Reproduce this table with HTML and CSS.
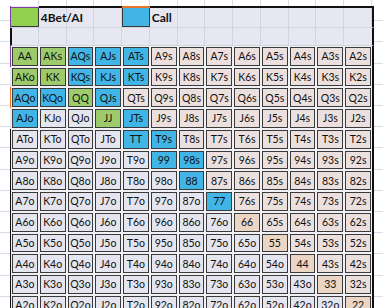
FILE: index.html
```html
<!DOCTYPE html>
<html>
<head>
<meta charset="utf-8">
<link rel="stylesheet" href="styles.css">
</head>
<body>
<div class="sheet">
  <div class="margin"></div>
  <div class="main">
    <div class="top-strip"></div>
    <div class="legend">
      <div class="swatch swatch-green"><span class="fill fill-green"></span></div>
      <div class="label label-4bet">4Bet/AI</div>
      <div class="swatch swatch-blue"><span class="fill fill-blue"></span></div>
      <div class="label label-call">Call</div>
    </div>
    <div class="blank"></div>
    <div class="hands">
      <div class="hand-row edge-purple"><div class="cell g">AA</div><div class="cell g">AKs</div><div class="cell b">AQs</div><div class="cell b">AJs</div><div class="cell b">ATs</div><div class="cell s">A9s</div><div class="cell s">A8s</div><div class="cell s">A7s</div><div class="cell s">A6s</div><div class="cell s">A5s</div><div class="cell s">A4s</div><div class="cell s">A3s</div><div class="cell s">A2s</div></div>
      <div class="hand-row"><div class="cell g">AKo</div><div class="cell g">KK</div><div class="cell b">KQs</div><div class="cell b">KJs</div><div class="cell b">KTs</div><div class="cell s">K9s</div><div class="cell s">K8s</div><div class="cell s">K7s</div><div class="cell s">K6s</div><div class="cell s">K5s</div><div class="cell s">K4s</div><div class="cell s">K3s</div><div class="cell s">K2s</div></div>
      <div class="hand-row edge-orange"><div class="cell b">AQo</div><div class="cell b">KQo</div><div class="cell g">QQ</div><div class="cell b">QJs</div><div class="cell s">QTs</div><div class="cell s">Q9s</div><div class="cell s">Q8s</div><div class="cell s">Q7s</div><div class="cell s">Q6s</div><div class="cell s">Q5s</div><div class="cell s">Q4s</div><div class="cell s">Q3s</div><div class="cell s">Q2s</div></div>
      <div class="hand-row"><div class="cell b">AJo</div><div class="cell o">KJo</div><div class="cell o">QJo</div><div class="cell g">JJ</div><div class="cell b">JTs</div><div class="cell s">J9s</div><div class="cell s">J8s</div><div class="cell s">J7s</div><div class="cell s">J6s</div><div class="cell s">J5s</div><div class="cell s">J4s</div><div class="cell s">J3s</div><div class="cell s">J2s</div></div>
      <div class="hand-row edge-black"><div class="cell o">ATo</div><div class="cell o">KTo</div><div class="cell o">QTo</div><div class="cell o">JTo</div><div class="cell b">TT</div><div class="cell b">T9s</div><div class="cell s">T8s</div><div class="cell s">T7s</div><div class="cell s">T6s</div><div class="cell s">T5s</div><div class="cell s">T4s</div><div class="cell s">T3s</div><div class="cell s">T2s</div></div>
      <div class="hand-row edge-black"><div class="cell o">A9o</div><div class="cell o">K9o</div><div class="cell o">Q9o</div><div class="cell o">J9o</div><div class="cell o">T9o</div><div class="cell b">99</div><div class="cell b">98s</div><div class="cell s">97s</div><div class="cell s">96s</div><div class="cell s">95s</div><div class="cell s">94s</div><div class="cell s">93s</div><div class="cell s">92s</div></div>
      <div class="hand-row edge-black"><div class="cell o">A8o</div><div class="cell o">K8o</div><div class="cell o">Q8o</div><div class="cell o">J8o</div><div class="cell o">T8o</div><div class="cell o">98o</div><div class="cell b">88</div><div class="cell s">87s</div><div class="cell s">86s</div><div class="cell s">85s</div><div class="cell s">84s</div><div class="cell s">83s</div><div class="cell s">82s</div></div>
      <div class="hand-row edge-black"><div class="cell o">A7o</div><div class="cell o">K7o</div><div class="cell o">Q7o</div><div class="cell o">J7o</div><div class="cell o">T7o</div><div class="cell o">97o</div><div class="cell o">87o</div><div class="cell b">77</div><div class="cell s">76s</div><div class="cell s">75s</div><div class="cell s">74s</div><div class="cell s">73s</div><div class="cell s">72s</div></div>
      <div class="hand-row edge-black"><div class="cell o">A6o</div><div class="cell o">K6o</div><div class="cell o">Q6o</div><div class="cell o">J6o</div><div class="cell o">T6o</div><div class="cell o">96o</div><div class="cell o">86o</div><div class="cell o">76o</div><div class="cell p">66</div><div class="cell s">65s</div><div class="cell s">64s</div><div class="cell s">63s</div><div class="cell s">62s</div></div>
      <div class="hand-row edge-black"><div class="cell o">A5o</div><div class="cell o">K5o</div><div class="cell o">Q5o</div><div class="cell o">J5o</div><div class="cell o">T5o</div><div class="cell o">95o</div><div class="cell o">85o</div><div class="cell o">75o</div><div class="cell o">65o</div><div class="cell p">55</div><div class="cell s">54s</div><div class="cell s">53s</div><div class="cell s">52s</div></div>
      <div class="hand-row edge-black"><div class="cell o">A4o</div><div class="cell o">K4o</div><div class="cell o">Q4o</div><div class="cell o">J4o</div><div class="cell o">T4o</div><div class="cell o">94o</div><div class="cell o">84o</div><div class="cell o">74o</div><div class="cell o">64o</div><div class="cell o">54o</div><div class="cell p">44</div><div class="cell s">43s</div><div class="cell s">42s</div></div>
      <div class="hand-row edge-black"><div class="cell o">A3o</div><div class="cell o">K3o</div><div class="cell o">Q3o</div><div class="cell o">J3o</div><div class="cell o">T3o</div><div class="cell o">93o</div><div class="cell o">83o</div><div class="cell o">73o</div><div class="cell o">63o</div><div class="cell o">53o</div><div class="cell o">43o</div><div class="cell p">33</div><div class="cell s">32s</div></div>
      <div class="hand-row edge-black"><div class="cell o">A2o</div><div class="cell o">K2o</div><div class="cell o">Q2o</div><div class="cell o">J2o</div><div class="cell o">T2o</div><div class="cell o">92o</div><div class="cell o">82o</div><div class="cell o">72o</div><div class="cell o">62o</div><div class="cell o">52o</div><div class="cell o">42o</div><div class="cell o">32o</div><div class="cell p">22</div></div>
    </div>
  </div>
  <div class="margin margin-right"></div>
</div>
</body>
</html>
```
FILE: styles.css
```css
* { box-sizing: border-box; margin: 0; padding: 0; }
html, body { width: 383px; height: 308px; overflow: hidden; background: #fff; }
body { font-family: Lato, "Liberation Sans", sans-serif; color: #111; }

.sheet { display: flex; height: 308px; }

.margin {
  width: 10px;
  flex: none;
  background: repeating-linear-gradient(to bottom, #fff 0 20.2px, #d8dce6 20.2px 21.2px);
}
.margin-right { flex: 1; width: auto; }

.main { width: 364px; flex: none; display: flex; flex-direction: column; }

.top-strip {
  height: 6px;
  flex: none;
  border-left: 1px solid transparent;
  background-clip: padding-box;
  background-image: repeating-linear-gradient(to right, transparent 0 26.77px, #d8dce6 26.77px 27.77px);
}

.legend {
  height: 22px;
  flex: none;
  display: grid;
  grid-template-columns: repeat(13, 1fr);
  border-left: 1px solid #7a3ea6;
  border-right: 2px solid #111;
  background-color: #e6e7f1;
  background-image: repeating-linear-gradient(to right, transparent 0 26.77px, #d0d5e2 26.77px 27.77px);
  border-bottom: 1px solid #d0d5e2;
}
.swatch { display: flex; flex-direction: column; }
.swatch-green { grid-column: 1; border-top: 1px solid #7a3ea6; margin-top: 1px; }
.swatch-blue { grid-column: 5; border-top: 2px solid #e8742a; }
.fill { flex: 1; display: block; border-right: 1px solid #3a3a3a; border-bottom: 1px solid #3a3a3a; }
.fill-green { background: #92d050; }
.fill-blue { background: #41b6e6; border-left: 1px solid #3a3a3a; }
.label {
  border-top: 2px solid #111;
  font-weight: bold;
  font-size: 12px;
  line-height: 19px;
  padding-left: 2px;
  white-space: nowrap;
}
.label-4bet { grid-column: 2 / 5; }
.label-call { grid-column: 6 / 14; }

.blank {
  height: 17.75px;
  flex: none;
  border-left: 2px solid #111;
  border-right: 2px solid #111;
  background-color: #e6e7f1;
  background-image: repeating-linear-gradient(to right, transparent 0 26.77px, #d0d5e2 26.77px 27.77px);
  background-position: -1px 0;
  border-bottom: 1px solid #d0d5e2;
}

.hands {
  border-right: 2px solid #111;
  background: #f1f1f5;
}
.hand-row {
  height: 20.75px;
  display: grid;
  grid-template-columns: repeat(13, 1fr);
  border-left: 1px solid #e2e4ec;
}
.edge-purple { border-left-color: #7a3ea6; }
.edge-orange { border-left-color: #e8742a; }
.edge-black { border-left-color: #111; }

.cell {
  margin: 1px;
  border: 1px solid #3a3a3a;
  display: flex;
  align-items: center;
  justify-content: center;
  font-size: 10.5px;
  white-space: nowrap;
  overflow: hidden;
}
.g { background: #9dcb6b; }
.b { background: #41b6e6; }
.s { background: #ece0de; }
.o { background: #e4e5ef; }
.p { background: #ebd5c5; }
```
